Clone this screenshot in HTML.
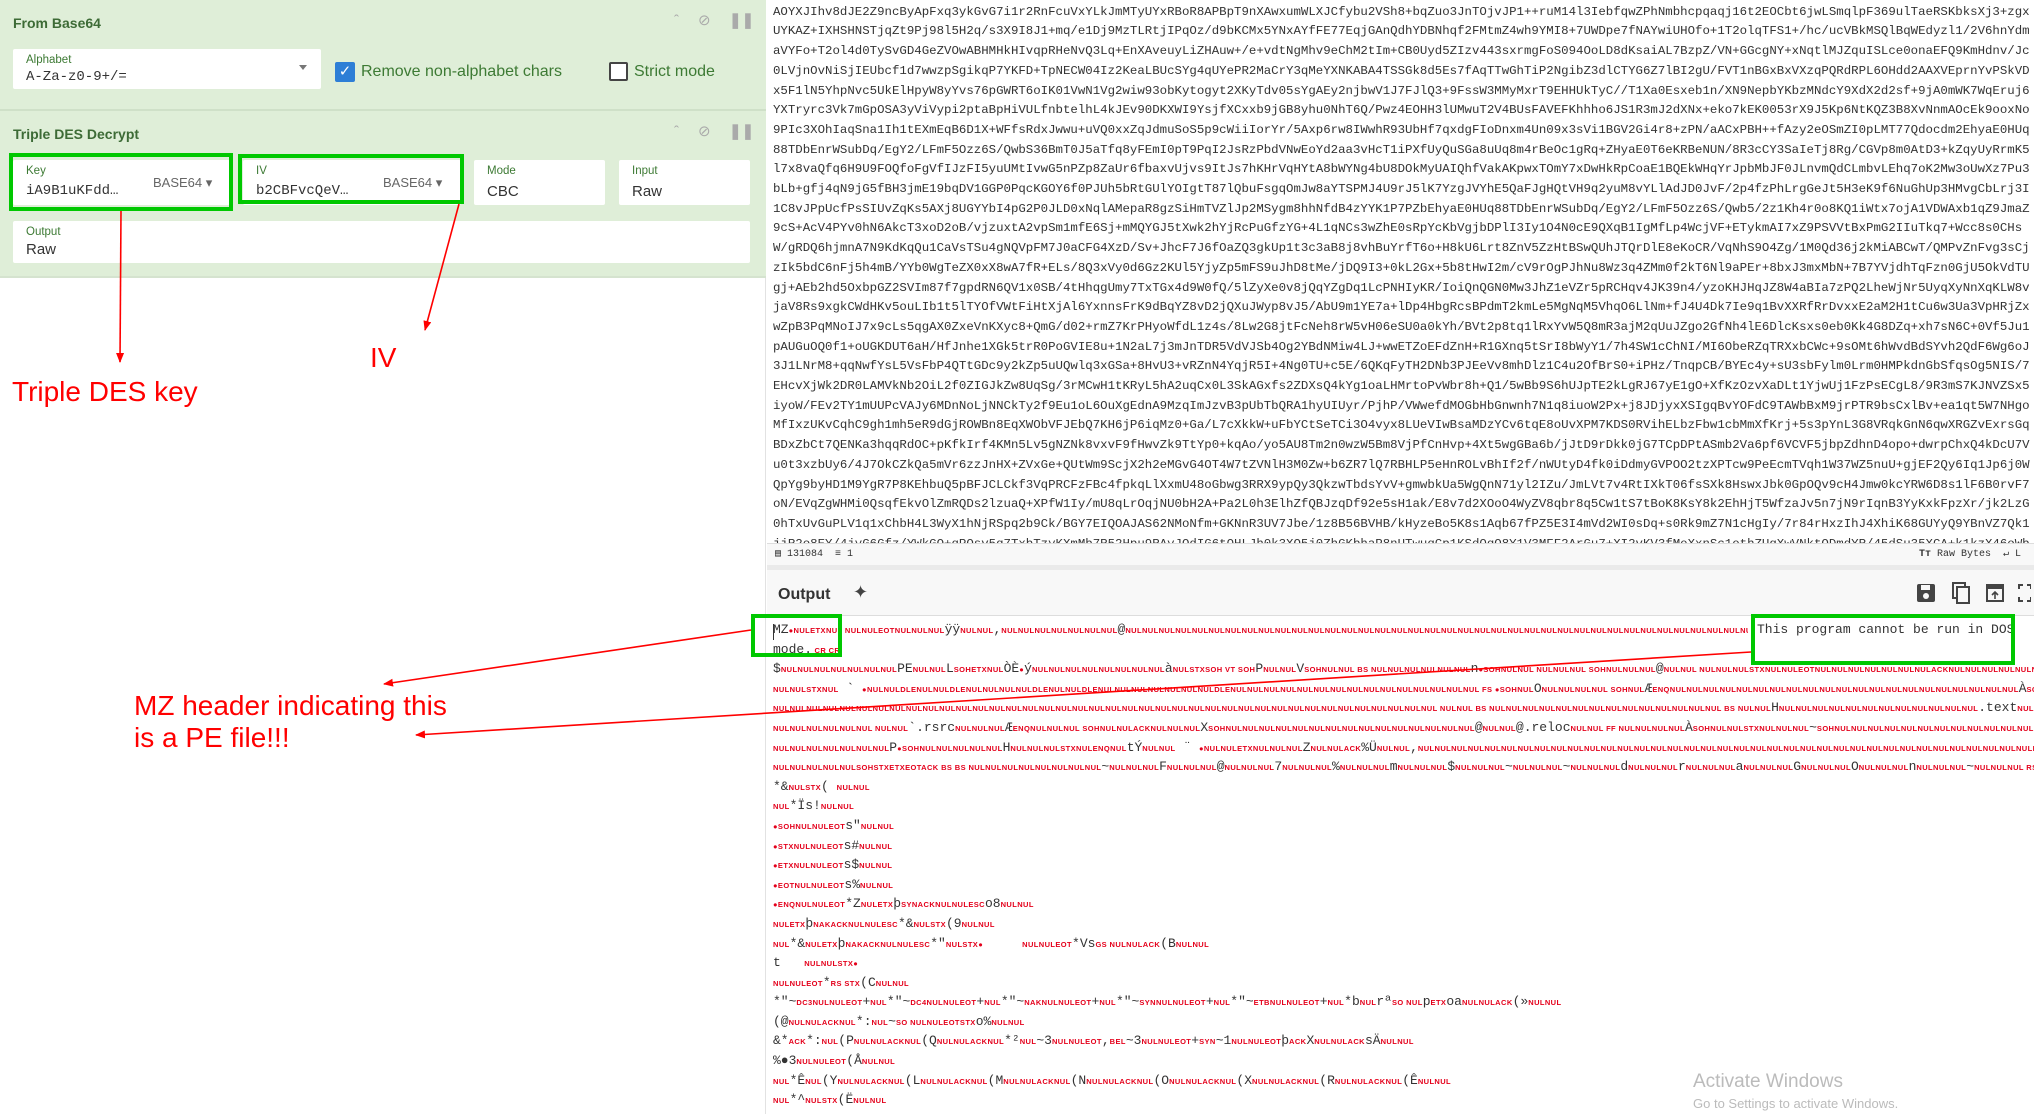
<!DOCTYPE html>
<html><head><meta charset="utf-8">
<style>
*{margin:0;padding:0;box-sizing:border-box}
body{width:2034px;height:1114px;overflow:hidden;background:#fff;font-family:"Liberation Sans",sans-serif;position:relative}
.left{position:absolute;left:0;top:0;width:766px;height:1114px;background:#fff;border-right:1px solid #e2e2e2}
.green{position:absolute;left:0;top:0;width:766px;height:277px;background:#dfeed8}
.hdr{position:absolute;left:13px;font-weight:bold;font-size:14px;color:#3d6b36}
.ic{position:absolute;color:#aaa;font-size:15px}
.box{position:absolute;background:#fff;border-radius:2px}
.lab{position:absolute;left:13px;top:5px;font-size:11.5px;color:#3d7a34}
.val{position:absolute;left:13px;top:23px;font-size:15px;color:#333}
.mono{font-family:"Liberation Mono",monospace}
.gb{position:absolute;border:4px solid #00c800}
.ann{position:absolute;color:#f00;font-size:28px;font-family:"Liberation Sans",sans-serif;line-height:32px}
.input{position:absolute;left:773px;top:-17px;width:1261px;font-family:"Liberation Mono",monospace;font-size:12.4px;line-height:19.7px;color:#333;word-break:break-all;height:560px;overflow:hidden}
.status{position:absolute;left:767px;top:543px;width:1267px;height:22px;background:#f8f8f8;border-top:1px solid #ddd;font-size:10px;color:#333}
.gap{position:absolute;left:767px;top:565px;width:1267px;height:5px;background:#eaeaea}
.ohdr{position:absolute;left:767px;top:570px;width:1267px;height:46px;background:#f8f8f8;border-bottom:1px solid #ddd}
.out{position:absolute;left:773px;top:620px;width:1261px;font-family:"Liberation Mono",monospace;font-size:13px;color:#333}
.out div{height:19.6px;line-height:19.6px;white-space:nowrap;overflow:hidden}
i{font-style:normal;color:#e4001b;font-size:7.5px;font-weight:bold;font-family:"Liberation Sans",sans-serif;letter-spacing:.4px}
.win{position:absolute;left:1693px;color:#bbb}
</style></head><body>
<div class="left">
 <div class="green"></div>
 <div class="hdr" style="top:15px">From Base64</div>
 <div class="ic" style="left:674px;top:12px">&#710;</div>
 <div class="ic" style="left:698px;top:11px">&#8856;</div>
 <div class="ic" style="left:729px;top:11px;font-weight:bold">&#10074;&#10074;</div>
 <div class="box" style="left:13px;top:49px;width:308px;height:40px"><div class="lab">Alphabet</div><div class="val mono" style="font-size:14px;top:20px">A-Za-z0-9+/=</div><div style="position:absolute;right:14px;top:16px;border:4px solid transparent;border-top:5px solid #777"></div></div>
 <div style="position:absolute;left:335px;top:62px;width:20px;height:20px;background:#2d7ed6;border-radius:2px;color:#fff;font-size:15px;text-align:center;line-height:20px">&#10003;</div>
 <div style="position:absolute;left:361px;top:63px;font-size:16px;color:#3d7a34">Remove non-alphabet chars</div>
 <div style="position:absolute;left:609px;top:62px;width:19px;height:19px;border:2px solid #444;border-radius:2px;background:#fff"></div>
 <div style="position:absolute;left:634px;top:63px;font-size:16px;color:#3d7a34">Strict mode</div>
 <div style="position:absolute;left:0;top:109px;width:766px;height:2px;background:#cfe0c8"></div>
 <div class="hdr" style="top:126px">Triple DES Decrypt</div>
 <div class="ic" style="left:674px;top:123px">&#710;</div>
 <div class="ic" style="left:698px;top:122px">&#8856;</div>
 <div class="ic" style="left:729px;top:122px;font-weight:bold">&#10074;&#10074;</div>
 <div class="box" style="left:13px;top:160px;width:217px;height:45px"><div class="lab">Key</div><div class="val mono" style="font-size:14px">iA9B1uKFdd…</div><div style="position:absolute;left:140px;top:15px;font-size:13px;color:#666">BASE64 &#9662;</div></div>
 <div class="box" style="left:243px;top:160px;width:218px;height:45px"><div class="lab">IV</div><div class="val mono" style="font-size:14px">b2CBFvcQeV…</div><div style="position:absolute;left:140px;top:15px;font-size:13px;color:#666">BASE64 &#9662;</div></div>
 <div class="box" style="left:474px;top:160px;width:131px;height:45px"><div class="lab">Mode</div><div class="val">CBC</div></div>
 <div class="box" style="left:619px;top:160px;width:131px;height:45px"><div class="lab">Input</div><div class="val">Raw</div></div>
 <div class="box" style="left:13px;top:221px;width:737px;height:42px"><div class="lab">Output</div><div class="val" style="top:20px">Raw</div></div>
 <div style="position:absolute;left:0;top:276px;width:766px;height:2px;background:#d5e3cf"></div>
</div>
<div class="gb" style="left:9px;top:153px;width:224px;height:58px"></div>
<div class="gb" style="left:238px;top:154px;width:226px;height:50px"></div>
<div class="ann" style="left:12px;top:376px">Triple DES key</div>
<div class="ann" style="left:370px;top:342px">IV</div>
<div class="ann" style="left:134px;top:690px">MZ header indicating this<br>is a PE file!!!</div>

<div class="input">nYI2KBmC3SIFs+82559XbgZCjI37+lCspqIyjtIb9SMRKO7VlkWIdJvAygyIYtq+kajV6xOj0t7E5aIjDcXI2q/1HIBTiMOFhWSpkW9RY7Y7CQAyyEjbpHVW7OzYC8n7e3DxNq0wYVgbLMhsa2Kp+x8jjVR1dPzCEzUn3k5GTAOYXJIhv8dJE2Z9ncByApFxq3ykGvG7i1r2RnFcuVxYLkJmMTyUYxRBoR8APBpT9nXAwxumWLXJCfybu2VSh8+bqZuo3JnTOjvJP1++ruM14l3IebfqwZPhNmbhcpqaqj16t2EOCbt6jwLSmqlpF369ulTaeRSKbksXj3+zgxUYKAZ+IXHSHNSTjqZt9Pj98l5H2q/s3X9I8J1+mq/e1Dj9MzTLRtjIPqOz/d9bKCMx5YNxAYfFE77EqjGAnQdhYDBNhqf2FMtmZ4wh9YMI8+7UWDpe7fNAYwiUHOfo+1T2olqTFS1+/hc/ucVBkMSQlBqWEdyzl1/2V6hnYdmaVYFo+T2ol4d0TySvGD4GeZVOwABHMHkHIvqpRHeNvQ3Lq+EnXAveuyLiZHAuw+/e+vdtNgMhv9eChM2tIm+CB0Uyd5ZIzv443sxrmgFoS094OoLD8dKsaiAL7BzpZ/VN+GGcgNY+xNqtlMJZquISLce0onaEFQ9KmHdnv/Jc0LVjnOvNiSjIEUbcf1d7wwzpSgikqP7YKFD+TpNECW04Iz2KeaLBUcSYg4qUYePR2MaCrY3qMeYXNKABA4TSSGk8d5Es7fAqTTwGhTiP2NgibZ3dlCTYG6Z7lBI2gU/FVT1nBGxBxVXzqPQRdRPL6OHdd2AAXVEprnYvPSkVDx5F1lN5YhpNvc5UkElHpyW8yYvs76pGWRT6oIK01VwN1Vg2wiw93obKytogyt2XKyTdv05sYgAEy2njbwV1J7FJlQ3+9FssW3MMyMxrT9EHHUkTyC//T1Xa0Esxeb1n/XN9NepbYKbzMNdcY9XdX2d2sf+9jA0mWK7WqEruj6YXTryrc3Vk7mGpOSA3yViVypi2ptaBpHiVULfnbtelhL4kJEv90DKXWI9YsjfXCxxb9jGB8yhu0NhT6Q/Pwz4EOHH3lUMwuT2V4BUsFAVEFKhhho6JS1R3mJ2dXNx+eko7kEK0053rX9J5Kp6NtKQZ3B8XvNnmAOcEk9ooxNo9PIc3XOhIaqSna1Ih1tEXmEqB6D1X+WFfsRdxJwwu+uVQ0xxZqJdmuSoS5p9cWiiIorYr/5Axp6rw8IWwhR93UbHf7qxdgFIoDnxm4Un09x3sVi1BGV2Gi4r8+zPN/aACxPBH++fAzy2eOSmZI0pLMT77Qdocdm2EhyaE0HUq88TDbEnrWSubDq/EgY2/LFmF5Ozz6S/QwbS36BmT0J5aTfq8yFEmI0pT9PqI2JsRzPbdVNwEoYd2aa3vHcT1iPXfUyQuSGa8uUq8m4rBeOc1gRq+ZHyaE0T6eKRBeNUN/8R3cCY3SaIeTj8Rg/CGVp8m0AtD3+kZqyUyRrmK5l7x8vaQfq6H9U9FOQfoFgVfIJzFI5yuUMtIvwG5nPZp8ZaUr6fbaxvUjvs9ItJs7hKHrVqHYtA8bWYNg4bU8DOkMyUAIQhfVakAKpwxTOmY7xDwHkRpCoaE1BQEkWHqYrJpbMbJF0JLnvmQdCLmbvLEhq7oK2Mw3oUwXz7Pu3bLb+gfj4qN9jG5fBH3jmE19bqDV1GGP0PqcKGOY6f0PJUh5bRtGUlYOIgtT87lQbuFsgqOmJw8aYTSPMJ4U9rJ5lK7YzgJVYhE5QaFJgHQtVH9q2yuM8vYLlAdJD0JvF/2p4fzPhLrgGeJt5H3eK9f6NuGhUp3HMvgCbLrj3I1C8vJPpUcfPsSIUvZqKs5AXj8UGYYbI4pG2P0JLD0xNqlAMepaR8gzSiHmTVZlJp2MSygm8hhNfdB4zYYK1P7PZbEhyaE0HUq88TDbEnrWSubDq/EgY2/LFmF5Ozz6S/Qwb5/2z1Kh4r0o8KQ1iWtx7ojA1VDWAxb1qZ9JmaZ9cS+AcV4PYv0hN6AkcT3xoD2oB/vjzuxtA2vpSm1mfE6Sj+mMQYGJ5tXwk2hYjRcPuGfzYG+4L1qNCs3wZhE0sRpYcKbVgjbDPlI3Iy1O4N0cE9QXqB1IgMfLp4WcjVF+ETykmAI7xZ9PSVVtBxPmG2IIuTkq7+Wcc8s0CHsW/gRDQ6hjmnA7N9KdKqQu1CaVsTSu4gNQVpFM7J0aCFG4XzD/Sv+JhcF7J6fOaZQ3gkUp1t3c3aB8j8vhBuYrfT6o+H8kU6Lrt8ZnV5ZzHtBSwQUhJTQrDlE8eKoCR/VqNhS9O4Zg/1M0Qd36j2kMiABCwT/QMPvZnFvg3sCjzIk5bdC6nFj5h4mB/YYb0WgTeZX0xX8wA7fR+ELs/8Q3xVy0d6Gz2KUl5YjyZp5mFS9uJhD8tMe/jDQ9I3+0kL2Gx+5b8tHwI2m/cV9rOgPJhNu8Wz3q4ZMm0f2kT6Nl9aPEr+8bxJ3mxMbN+7B7YVjdhTqFzn0GjU5OkVdTUgj+AEb2hd5OxbpGZ2SVIm87f7gpdRN6QV1x0SB/4tHhqgUmy7TxTGx4d9W0fQ/5lZyXe0v8jQqYZgDq1LcPNHIyKR/IoiQnQGN0Mw3JhZ1eVZr5pRCHqv4JK39n4/yzoKHJHqJZ8W4aBIa7zPQ2LheWjNr5UyqXyNnXqKLW8vjaV8Rs9xgkCWdHKv5ouLIb1t5lTYOfVWtFiHtXjAl6YxnnsFrK9dBqYZ8vD2jQXuJWyp8vJ5/AbU9m1YE7a+lDp4HbgRcsBPdmT2kmLe5MgNqM5VhqO6LlNm+fJ4U4Dk7Ie9q1BvXXRfRrDvxxE2aM2H1tCu6w3Ua3VpHRjZxwZpB3PqMNoIJ7x9cLs5qgAX0ZxeVnKXyc8+QmG/d02+rmZ7KrPHyoWfdL1z4s/8Lw2G8jtFcNeh8rW5vH06eSU0a0kYh/BVt2p8tq1lRxYvW5Q8mR3ajM2qUuJZgo2GfNh4lE6DlcKsxs0eb0Kk4G8DZq+xh7sN6C+0Vf5Ju1pAUGuOQ0f1+oUGKDUT6aH/HfJnhe1XGk5trR0PoGVIE8u+1N2aL7j3mJnTDR5VdVJSb4Og2YBdNMiw4LJ+wwETZoEFdZnH+R1GXnq5tSrI8bWyY1/7h4SW1cChNI/MI6ObeRZqTRXxbCWc+9sOMt6hWvdBdSYvh2QdF6Wg6oJ3J1LNrM8+qqNwfYsL5VsFbP4QTtGDc9y2kZp5uUQwlq3xGSa+8HvU3+vRZnN4YqjR5I+4Ng0TU+c5E/6QKqFyTH2DNb3PJEeVv8mhDlz1C4u2OfBrS0+iPHz/TnqpCB/BYEc4y+sU3sbFylm0Lrm0HMPkdnGbSfqsOg5NIS/7EHcvXjWk2DR0LAMVkNb2OiL2f0ZIGJkZw8UqSg/3rMCwH1tKRyL5hA2uqCx0L3SkAGxfs2ZDXsQ4kYg1oaLHMrtoPvWbr8h+Q1/5wBb9S6hUJpTE2kLgRJ67yE1gO+XfKzOzvXaDLt1YjwUj1FzPsECgL8/9R3mS7KJNVZSx5iyoW/FEv2TY1mUUPcVAJy6MDnNoLjNNCkTy2f9Eu1oL6OuXgEdnA9MzqImJzvB3pUbTbQRA1hyUIUyr/PjhP/VWwefdMOGbHbGnwnh7N1q8iuoW2Px+j8JDjyxXSIgqBvYOFdC9TAWbBxM9jrPTR9bsCxlBv+ea1qt5W7NHgoMfIxzUKvCqhC9gh1mh5eR9dGjROWBn8EqXWObVFJEbQ7KH6jP6iqMz0+Ga/L7cXkkW+uFbYCtSeTCi3O4vyx8LUeVIwBsaMDzYCv6tqE8oUvXPM7KDS0RVihELbzFbw1cbMmXfKrj+5s3pYnL3G8VRqkGnN6qwXRGZvExrsGqBDxZbCt7QENKa3hqqRdOC+pKfkIrf4KMn5Lv5gNZNk8vxvF9fHwvZk9TtYp0+kqAo/yo5AU8Tm2n0wzW5Bm8VjPfCnHvp+4Xt5wgGBa6b/jJtD9rDkk0jG7TCpDPtASmb2Va6pf6VCVF5jbpZdhnD4opo+dwrpChxQ4kDcU7Vu0t3xzbUy6/4J7OkCZkQa5mVr6zzJnHX+ZVxGe+QUtWm9ScjX2h2eMGvG4OT4W7tZVNlH3M0Zw+b6ZR7lQ7RBHLP5eHnROLvBhIf2f/nWUtyD4fk0iDdmyGVPOO2tzXPTcw9PeEcmTVqh1W37WZ5nuU+gjEF2Qy6Iq1Jp6j0WQpYg9byHD1M9YgR7P8KEhbuQ5pBFJCLCkf3VqPRCFzFBc4fpkqLlXxmU48oGbwg3RRX9ypQy3QkzwTbdsYvV+gmwbkUa5WgQnN71yl2IZu/JmLVt7v4RtIXkT06fsSXk8HswxJbk0GpOQv9cH4Jmw0kcYRW6D8s1lF6B0rvF7oN/EVqZgWHMi0QsqfEkvOlZmRQDs2lzuaQ+XPfW1Iy/mU8qLrOqjNU0bH2A+Pa2L0h3ElhZfQBJzqDf92e5sH1ak/E8v7d2XOoO4WyZV8qbr8q5Cw1tS7tBoK8KsY8k2EhHjT5WfzaJv5n7jN9rIqnB3YyKxkFpzXr/jk2LzG0hTxUvGuPLV1q1xChbH4L3WyX1hNjRSpq2b9Ck/BGY7EIQOAJAS62NMoNfm+GKNnR3UV7Jbe/1z8B56BVHB/kHyzeBo5K8s1Aqb67fPZ5E3I4mVd2WI0sDq+s0Rk9mZ7N1cHgIy/7r84rHxzIhJ4XhiK68GUYyQ9YBnVZ7Qk1jjR2o8EY/4jyG6Gfz/YWkGQ+qPQsv5q7TxbTzyKXmMb7R52Hpu9RAyJQdIG6tOHLJh0k3XQ5j0ZhGKbhaP8nUTwuqCp1KSdOqQ8Y1V3MFF2ArGu7+XI2vKV3fMeXxnSc1ethZUgXwVNktQDmdYR/45dSu35XCA+k1kzX46oWbEb3NY/Z4v16xDA13b0scOYTBXtRdArhls8g9fuqpdyDYULoFoMGvRXQEm1E5ceLqVLM=</div>

<div class="status"><span style="position:absolute;left:8px;top:4px" class="mono">&#9636; 131084 &nbsp;&#8801; 1</span><span style="position:absolute;left:1152px;top:4px" class="mono"><b>T&#1090;</b> Raw Bytes &nbsp;&#8629; L</span></div>
<div class="gap"></div>
<div class="ohdr"><span style="position:absolute;left:11px;top:16px;font-size:16px;font-weight:bold;color:#333">Output</span><span style="position:absolute;left:86px;top:12px;font-size:18px;color:#444">&#10022;</span>
<svg style="position:absolute;left:1144px;top:12px" width="120" height="22" viewBox="0 0 120 22"><rect x="6" y="2" width="18" height="18" rx="2" fill="#444"/><rect x="10" y="3" width="9" height="5" fill="#f8f8f8"/><circle cx="15" cy="14" r="3" fill="#f8f8f8"/><rect x="42" y="1" width="12" height="15" fill="none" stroke="#444" stroke-width="2"/><rect x="46" y="5" width="12" height="16" fill="#f8f8f8" stroke="#444" stroke-width="2"/><rect x="76" y="3" width="16" height="16" fill="none" stroke="#444" stroke-width="2"/><rect x="76" y="3" width="16" height="4" fill="#444"/><path d="M84 17V10M81 13l3-3 3 3" stroke="#444" stroke-width="1.6" fill="none"/><path d="M108 7V3h4M116 3h4v4M120 15v4h-4M112 19h-4v-4" stroke="#444" stroke-width="2" fill="none"/></svg></div>

<div class="out">
<div style="width:975px">MZ<i>●NULETXNUL NULNULEOTNULNULNUL</i>ÿÿ<i>NULNUL</i>,<i>NULNULNULNULNULNULNUL</i>@<i>NULNULNULNULNULNULNULNULNULNULNULNULNULNULNULNULNULNULNULNULNULNULNULNULNULNULNULNULNULNULNULNULNULNULNULNULNULNULNULNULNUL●NULNULNUL SO US</i>º<i>SO NUL</i> ´ Í!,<i>SOH</i>LÍ</div>
<div>mode.<i> CR CR</i></div>
<div>$<i>NULNULNULNULNULNULNUL</i>PE<i>NULNUL</i>L<i>SOHETXNUL</i>ÒÈ<i>●</i>ý<i>NULNULNULNULNULNULNULNUL</i>à<i>NULSTXSOH VT SOH</i>P<i>NULNUL</i>V<i>SOHNULNUL BS NULNULNULNULNULNUL</i>n<i>●SOHNULNUL NULNULNUL SOHNULNULNUL</i>@<i>NULNUL NULNULNULSTXNULNULEOTNULNULNULNULNULNULNULACKNULNULNULNULNULNULNULNUL</i>à<i>SOHNULNULSTXNULNULNULNULNULNUL</i></div>
<div><i>NULNULSTXNUL</i> ` <i>●NULNULDLENULNULDLENULNULNULNULDLENULNULDLENULNULNULNULNULNULNULDLENULNULNULNULNULNULNULNULNULNULNULNULNULNULNUL FS ●SOHNUL</i>O<i>NULNULNULNUL SOHNUL</i>Æ<i>ENQNULNULNULNULNULNULNULNULNULNULNULNULNULNULNULNULNULNULNULNULNUL</i>À<i>SOHNUL FF NULNULNULNULNULNULNULNULNULNULNULNULNULNULNULNULNULNULNULNULNUL</i></div>
<div><i>NULNULNULNULNULNULNULNULNULNULNULNULNULNULNULNULNULNULNULNULNULNULNULNULNULNULNULNULNULNULNULNULNULNULNULNULNULNULNULNUL NULNUL BS NULNULNULNULNULNULNULNULNULNULNULNULNULNUL BS NULNUL</i>H<i>NULNULNULNULNULNULNULNULNULNULNULNUL</i>.text<i>NULNULNULNUL</i>tu<i>SOHNULNUL NULNULNUL</i>V<i>SOHNULNULSTXNULNULNULNULNULNULNULNUL</i></div>
<div><i>NULNULNULNULNULNUL NULNUL</i>`.rsrc<i>NULNULNUL</i>Æ<i>ENQNULNULNUL SOHNULNULACKNULNULNUL</i>X<i>SOHNULNULNULNULNULNULNULNULNULNULNULNULNULNULNUL</i>@<i>NULNUL</i>@.reloc<i>NULNUL FF NULNULNULNUL</i>À<i>SOHNULNULSTXNULNULNUL</i>~<i>SOHNULNULNULNULNULNULNULNULNULNULNULNULNULNUL</i>@<i>NULNUL</i>B<i>NULNULNULNULNULNULNULNULNUL</i></div>
<div><i>NULNULNULNULNULNULNUL</i>P<i>●SOHNULNULNULNULNUL</i>H<i>NULNULNULSTXNULENQNUL</i>tÝ<i>NULNUL</i> ¨ <i>●NULNULETXNULNULNUL</i>Z<i>NULNULACK</i>%Ü<i>NULNUL</i>,<i>NULNULNULNULNULNULNULNULNULNULNULNULNULNULNULNULNULNULNULNULNULNULNULNULNULNULNULNULNULNULNULNULNULNULNULNULNULNULNULNULNULNUL●</i>}ü<i>SI</i> ●³èis ¯ÿ<i>NUL</i></div>
<div><i>NULNULNULNULNULSOHSTXETXEOTACK BS BS NULNULNULNULNULNULNULNUL</i>~<i>NULNULNUL</i>F<i>NULNULNUL</i>@<i>NULNULNUL</i>7<i>NULNULNUL</i>%<i>NULNULNUL</i>m<i>NULNULNUL</i>$<i>NULNULNUL</i>~<i>NULNULNUL</i>~<i>NULNULNUL</i>d<i>NULNULNUL</i>r<i>NULNULNUL</i>a<i>NULNULNUL</i>G<i>NULNULNUL</i>O<i>NULNULNUL</i>n<i>NULNULNUL</i>~<i>NULNULNUL RS STX</i>( <i>US NULNUL</i></div>
<div>*&amp;<i>NULSTX</i>( <i>NULNUL</i></div>
<div><i>NUL</i>*Ïs!<i>NULNUL</i></div>
<div><i>●SOHNULNULEOT</i>s"<i>NULNUL</i></div>
<div><i>●STXNULNULEOT</i>s#<i>NULNUL</i></div>
<div><i>●ETXNULNULEOT</i>s$<i>NULNUL</i></div>
<div><i>●EOTNULNULEOT</i>s%<i>NULNUL</i></div>
<div><i>●ENQNULNULEOT</i>*Z<i>NULETX</i>þ<i>SYNACKNULNULESC</i>o8<i>NULNUL</i></div>
<div><i>NULETX</i>þ<i>NAKACKNULNULESC</i>*&amp;<i>NULSTX</i>(9<i>NULNUL</i></div>
<div><i>NUL</i>*&amp;<i>NULETX</i>þ<i>NAKACKNULNULESC</i>*"<i>NULSTX●</i>&nbsp;&nbsp;&nbsp;&nbsp;&nbsp;<i>NULNULEOT</i>*Vs<i>GS NULNULACK</i>(B<i>NULNUL</i></div>
<div>t&nbsp;&nbsp;&nbsp;<i>NULNULSTX●</i></div>
<div><i>NULNULEOT</i>*<i>RS STX</i>(C<i>NULNUL</i></div>
<div>*"~<i>DC3NULNULEOT</i>+<i>NUL</i>*"~<i>DC4NULNULEOT</i>+<i>NUL</i>*"~<i>NAKNULNULEOT</i>+<i>NUL</i>*"~<i>SYNNULNULEOT</i>+<i>NUL</i>*"~<i>ETBNULNULEOT</i>+<i>NUL</i>*b<i>NUL</i>rª<i>SO NUL</i>p<i>ETX</i>oa<i>NULNULACK</i>(»<i>NULNUL</i></div>
<div>(@<i>NULNULACKNUL</i>*:<i>NUL</i>~<i>SO NULNULEOTSTX</i>o%<i>NULNUL</i></div>
<div>&amp;*<i>ACK</i>*:<i>NUL</i>(P<i>NULNULACKNUL</i>(Q<i>NULNULACKNUL</i>*²<i>NUL</i>~3<i>NULNULEOT</i>,<i>BEL</i>~3<i>NULNULEOT</i>+<i>SYN</i>~1<i>NULNULEOT</i>þ<i>ACK</i>X<i>NULNULACK</i>sÄ<i>NULNUL</i></div>
<div>%●3<i>NULNULEOT</i>(Å<i>NULNUL</i></div>
<div><i>NUL</i>*Ê<i>NUL</i>(Y<i>NULNULACKNUL</i>(L<i>NULNULACKNUL</i>(M<i>NULNULACKNUL</i>(N<i>NULNULACKNUL</i>(O<i>NULNULACKNUL</i>(X<i>NULNULACKNUL</i>(R<i>NULNULACKNUL</i>(Ê<i>NULNUL</i></div>
<div><i>NUL</i>*^<i>NULSTX</i>(Ë<i>NULNUL</i></div>
</div>
<div style="position:absolute;left:773px;top:624px;width:1px;height:16px;background:#333"></div>
<div class="mono" style="position:absolute;left:1757px;top:620px;font-size:13px;line-height:19.6px;color:#333">This program cannot be run in DOS</div>
<div class="win" style="top:1071px;font-size:19px">Activate Windows</div>
<div class="win" style="top:1096px;font-size:13px">Go to Settings to activate Windows.</div>

<div class="gb" style="left:751px;top:614px;width:91px;height:43px"></div>
<div class="gb" style="left:1751px;top:614px;width:264px;height:51px"></div>

<svg style="position:absolute;left:0;top:0" width="2034" height="1114">
<defs><marker id="a" markerWidth="10" markerHeight="8" refX="9" refY="4" orient="auto" markerUnits="userSpaceOnUse"><path d="M0 0L10 4L0 8z" fill="#f00"/></marker></defs>
<g stroke="#f00" stroke-width="1.6" fill="none" marker-end="url(#a)">
<line x1="121" y1="211" x2="120" y2="362"/>
<line x1="459" y1="204" x2="425" y2="330"/>
<line x1="751" y1="630" x2="384" y2="684"/>
<line x1="1751" y1="652" x2="416" y2="735"/>
</g></svg>
</body></html>
